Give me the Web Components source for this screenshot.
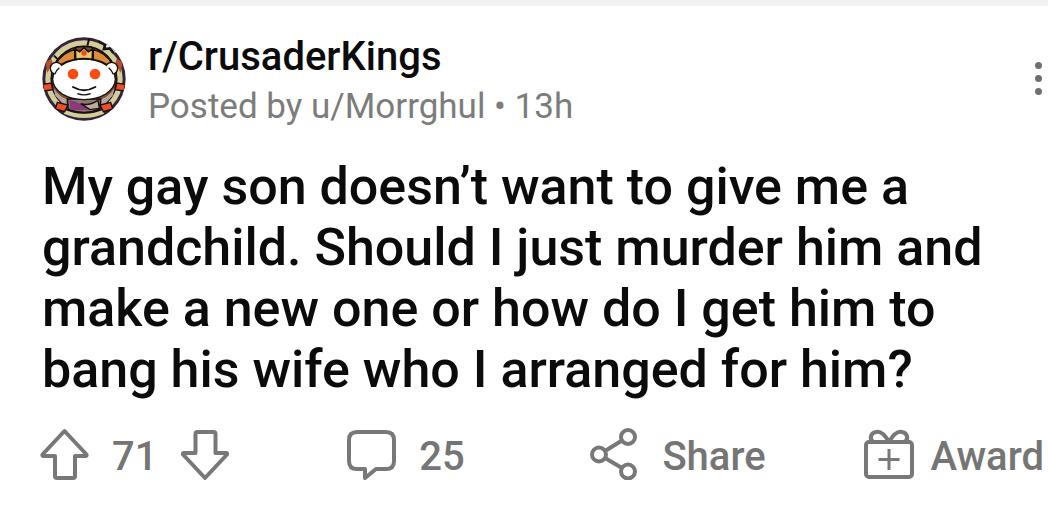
<!DOCTYPE html>
<html lang="en">
<head>
<meta charset="utf-8">
<meta name="viewport" content="width=device-width, initial-scale=1">
<title>r/CrusaderKings</title>
<style>
body { margin: 0; background: #fff; font-family: Roboto, "Liberation Sans", sans-serif; color: #0b0b0b; }
</style>
</head>
<body>
<reddit-post></reddit-post>

<template id="t-avatar">
<style>
:host { display: block; width: 84px; height: 84px; flex: none; }
svg { display: block; width: 100%; height: 100%; }
</style>
<svg viewBox="36 36 252 252" role="img" aria-label="Community icon">
  <defs><clipPath id="disc"><circle cx="162" cy="162" r="124"/></clipPath></defs>
  <circle cx="162" cy="162" r="125" fill="#352338"/>
  <circle cx="162" cy="162" r="108" fill="#7b4f28" stroke="#d3cc9b" stroke-width="16"/>
  <circle cx="162" cy="162" r="98" fill="none" stroke="#17100f" stroke-width="5"/>
  <g clip-path="url(#disc)">
    <path d="M78 118 Q94 84 134 74 V104 Q104 108 84 126Z M190 74 Q230 84 246 118 L240 126 Q220 108 190 104Z" fill="#dd8a3a" stroke="#17100f" stroke-width="4"/>
    <path d="M178 40 L172 62 M72 92 L84 104" stroke="#17100f" stroke-width="6"/>
    <path d="M216 30 L212 50 L226 58 L222 72 L240 70 L248 82 L270 84 L280 50Z" fill="#fff"/>
    <path d="M206 50 L214 52 L226 58 L222 72 L240 70 L250 84" fill="none" stroke="#17100f" stroke-width="8"/>
    <path d="M46 110 L64 102 L68 114 L52 144Z M278 110 L260 102 L256 114 L272 144Z" fill="#b5502a"/>
    <path d="M70 188 Q90 222 128 226 L104 242 L76 212Z M254 188 Q234 222 196 226 L220 242 L248 212Z" fill="#b3a5a0"/>
    <path d="M112 222 H212 L210 252 Q162 274 114 252Z" fill="#8d7770" stroke="#17100f" stroke-width="5"/>
    <path d="M118 226 Q144 230 180 254 L122 256Z" fill="#8a3a78"/>
    <path d="M152 236 Q176 244 204 226 L208 250 L180 254Z" fill="#c0ad98" stroke="#17100f" stroke-width="4"/>
    <path d="M104 260 Q162 284 220 260" fill="none" stroke="#d3cc9b" stroke-width="13"/>
    <path d="M102 251 Q162 276 222 251" fill="none" stroke="#17100f" stroke-width="5"/>
    <path d="M38 178 L64 174 L68 194 L42 198Z M286 178 L260 174 L256 194 L282 198Z M82 232 L114 240 L104 260 L76 252Z M242 232 L210 240 L220 260 L248 252Z" fill="#f04e22" stroke="#17100f" stroke-width="4"/>
  </g>
  <g fill="#fff" stroke="#17100f" stroke-width="8">
    <circle cx="79" cy="130" r="16"/><circle cx="245" cy="130" r="16"/>
    <ellipse cx="162" cy="163" rx="92" ry="59"/>
  </g>
  <g fill="#fff">
    <circle cx="79" cy="130" r="16"/><circle cx="245" cy="130" r="16"/>
    <ellipse cx="162" cy="163" rx="92" ry="59"/>
  </g>
  <path d="M74 148 Q78 136 88 128 M250 148 Q246 136 236 128" fill="none" stroke="#17100f" stroke-width="4"/>
  <path d="M137 103 L136 72 L149 80 L162 68 L175 80 L188 72 L187 103 Q162 99 137 103Z" fill="#edc46c" stroke="#17100f" stroke-width="5"/>
  <circle cx="162" cy="84" r="8" fill="#ed4b1f"/>
  <circle cx="129" cy="147" r="16" fill="#ff4a12"/><circle cx="195" cy="147" r="16" fill="#ff4a12"/>
  <path d="M129 186 Q162 205 196 186" fill="none" stroke="#17100f" stroke-width="6" stroke-linecap="round"/>
  <path d="M142 206 Q162 213 182 206" fill="none" stroke="#17100f" stroke-width="4"/>
</svg>
</template>

<template id="t-icon">
<style>
:host { display: block; width: 50px; height: 52px; flex: none; }
svg { display: none; width: 100%; height: 100%; fill: none; stroke: #787878; stroke-width: 4; stroke-linejoin: round; }
:host([name="up"]) .up, :host([name="down"]) .down, :host([name="comment"]) .comment,
:host([name="share"]) .share, :host([name="award"]) .award { display: block; }
</style>
<svg class="up" viewBox="0 0 50 52" aria-hidden="true"><path d="M24.500 3 L46.500 26.500 Q47 28 45.500 28 H35 V48 Q35 50 33 50 H17 Q15 50 15 48 V28 H3.500 Q2 28 2.500 26.500Z"/></svg>
<svg class="down" viewBox="0 0 50 52" aria-hidden="true"><path d="M26 50 L48 26.500 Q48.500 25 47 25 H36.500 V6 Q36.500 4 34.500 4 H18.500 Q16.500 4 16.500 6 V25 H5 Q3.500 25 4 26.500Z"/></svg>
<svg class="comment" viewBox="0 0 50 52" aria-hidden="true"><path d="M10 4 H39 Q47 4 47 12 V33 Q47 41 39 41 H29 L18 50 V41 H10 Q2 41 2 33 V12 Q2 4 10 4Z"/></svg>
<svg class="share" viewBox="0 0 50 52" aria-hidden="true"><circle cx="9" cy="26.500" r="7"/><circle cx="38" cy="9" r="7"/><circle cx="38" cy="43.500" r="7"/><path d="M15 23 L32 12.500 M15 30 L32 40"/></svg>
<svg class="award" viewBox="0 0 50 52" aria-hidden="true"><rect x="2" y="14" width="46" height="35" rx="3"/><path d="M25 14 C21 7 16 3 12 4 C6 5 5 12 10 14 M25 14 C29 7 34 3 38 4 C44 5 45 12 40 14"/><path d="M25 21 V42 M14.500 31.500 H35.500" stroke-width="3"/></svg>
</template>

<template id="t-action">
<style>
:host { display: block; }
button { display: flex; align-items: flex-start; gap: var(--gap, 22px); margin: 0; padding: 0; border: 0; background: none; font: 500 40px/58px Roboto, "Liberation Sans", sans-serif; color: #757575; white-space: nowrap; cursor: pointer; }
</style>
<button type="button"><slot></slot></button>
</template>

<template id="t-header">
<style>
:host { display: flex; align-items: center; gap: 22px; padding: 0 0 0 42px; }
.meta { flex: 1; min-width: 0; padding-top: 6px; }
a { color: inherit; text-decoration: none; }
.name { font-size: 40px; line-height: 50px; font-weight: 500; }
.by { font-size: 35px; line-height: 50px; color: #7c7c7c; }
button { display: flex; flex-direction: column; align-items: center; gap: 6px; padding: 0; margin: 0 6px 2px 0; border: 0; background: none; cursor: pointer; }
i { width: 7px; height: 7px; border-radius: 50%; background: #707070; }
</style>
<community-avatar></community-avatar>
<div class="meta">
  <div class="name"><a href="#community">r/CrusaderKings</a></div>
  <div class="by">Posted by <a href="#author">u/Morrghul</a> • 13h</div>
</div>
<button type="button" aria-label="More options"><i></i><i></i><i></i></button>
</template>

<template id="t-actions">
<style>
:host { display: grid; grid-template-columns: 307fr 243fr 273fr auto; align-items: start; padding: 0 4px 0 40px; }
.vote { display: flex; align-items: flex-start; gap: 22px; font-size: 40px; line-height: 58px; font-weight: 500; color: #757575; }
post-action.award { --gap: 17px; }
</style>
<div class="vote">
  <post-action><post-icon name="up"></post-icon><span hidden>Upvote</span></post-action>
  <span>71</span>
  <post-action><post-icon name="down"></post-icon><span hidden>Downvote</span></post-action>
</div>
<post-action><post-icon name="comment"></post-icon>25</post-action>
<post-action><post-icon name="share"></post-icon>Share</post-action>
<post-action class="award"><post-icon name="award"></post-icon>Award</post-action>
</template>

<template id="t-post">
<style>
:host { display: block; border-top: 6px solid #f2f2f2; padding-top: 20px; }
h1 { margin: 24px 0 28px; padding: 0 42px; font-size: 52px; line-height: 61px; font-weight: 500; }
</style>
<article>
  <post-header></post-header>
  <h1>My gay son doesn’t want to give me a grandchild. Should I just murder him and make a new one or how do I get him to bang his wife who I arranged for him?</h1>
  <post-actions></post-actions>
</article>
</template>

<script>
const define = (name, id) => customElements.define(name, class extends HTMLElement {
  constructor() {
    super();
    this.attachShadow({ mode: "open" }).append(document.getElementById(id).content.cloneNode(true));
  }
});
define("community-avatar", "t-avatar");
define("post-icon", "t-icon");
define("post-action", "t-action");
define("post-header", "t-header");
define("post-actions", "t-actions");
define("reddit-post", "t-post");
</script>
</body>
</html>
